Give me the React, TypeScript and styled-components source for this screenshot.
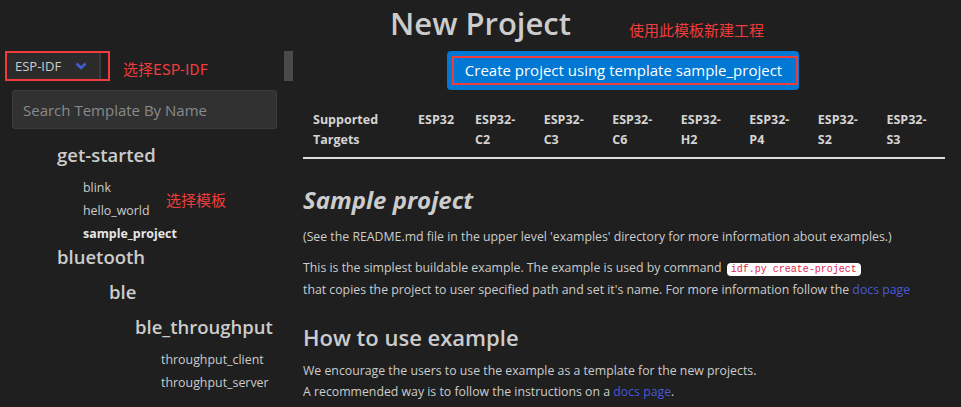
import React from 'react';
import styled, { createGlobalStyle } from 'styled-components';

const GlobalStyle = createGlobalStyle`
  html, body {
    margin: 0;
    padding: 0;
    background: #1f1f1f;
  }
  body {
    font-family: "Open Sans", "Noto Sans", "Noto Sans CJK SC", sans-serif;
    color: #cccccc;
  }
`;

interface TreeNode {
  name: string;
  indent?: number;
  children?: TreeNode[];
  leaves?: string[];
  selected?: string;
}

const tree: TreeNode[] = [
  {
    name: 'get-started',
    leaves: ['blink', 'hello_world', 'sample_project'],
    selected: 'sample_project',
  },
  {
    name: 'bluetooth',
    children: [
      {
        name: 'ble',
        indent: 52,
        children: [
          {
            name: 'ble_throughput',
            indent: 26,
            leaves: ['throughput_client', 'throughput_server'],
          },
        ],
      },
    ],
  },
];

const targets = ['ESP32', 'ESP32-C2', 'ESP32-C3', 'ESP32-C6', 'ESP32-H2', 'ESP32-P4', 'ESP32-S2', 'ESP32-S3'];

const Page = styled.div`
  position: relative;
  width: 961px;
  height: 407px;
  overflow: hidden;
`;

const Header = styled.header`
  height: 51px;
  display: flex;
  align-items: center;
  justify-content: center;
`;

const Title = styled.h1`
  margin: 0;
  font-size: 31px;
  font-weight: 600;
  color: #cccccc;
  line-height: 40px;
  padding-bottom: 6px;
`;

const Note = styled.span<{ $top: number; $left: number }>`
  position: absolute;
  top: ${(p) => p.$top}px;
  left: ${(p) => p.$left}px;
  color: #f03c3c;
  font-size: 15px;
  font-family: "Noto Sans CJK SC", sans-serif;
  line-height: 20px;
  white-space: nowrap;
`;

const Columns = styled.div`
  display: flex;
`;

const Sidebar = styled.aside`
  position: relative;
  width: 290px;
  flex-shrink: 0;
`;

const Scroll = styled.div`
  position: absolute;
  top: 0;
  left: 284px;
  width: 9px;
  height: 30px;
  background: #4a4a4a;
`;

const PickerRow = styled.div`
  display: flex;
  align-items: center;
  padding-left: 5px;
  height: 30px;
`;

const Highlight = styled.div`
  border: 2px solid #f03c3c;
  padding-right: 7px;
  display: flex;
  flex-shrink: 0;
`;

const Select = styled.div`
  width: 94px;
  height: 26px;
  flex-shrink: 0;
  background: #2b2b2b;
  border-right: 2px solid #3a3a3a;
  display: flex;
  align-items: center;
  justify-content: space-between;
  padding: 0 12px 0 8px;
  box-sizing: border-box;
  font-size: 13px;
  color: #cccccc;
`;

const Search = styled.input`
  display: block;
  margin: 9px 0 0 12px;
  width: 265px;
  height: 39px;
  box-sizing: border-box;
  background: #313131;
  border: 1px solid #3c3c3c;
  border-radius: 3px;
  padding: 0 10px;
  font-family: inherit;
  font-size: 15px;
  color: #cccccc;
  outline: none;

  &::placeholder {
    color: #8a8a8a;
  }
`;

const Tree = styled.div`
  margin-top: 14px;
  padding-left: 57px;
`;

const Group = styled.div<{ $indent: number }>`
  padding-left: ${(p) => p.$indent}px;
  margin-top: ${(p) => (p.$indent ? 11 : 0)}px;
`;

const GroupName = styled.div`
  font-size: 18.5px;
  font-weight: 600;
  line-height: 24px;
  color: #cccccc;
`;

const Leaves = styled.ul`
  list-style: none;
  margin: 9px 0 0;
  padding: 0 0 0 26px;
`;

const Leaf = styled.li<{ $active?: boolean }>`
  font-size: 12.4px;
  line-height: 23px;
  font-weight: ${(p) => (p.$active ? 700 : 400)};
  color: ${(p) => (p.$active ? '#e6e6e6' : '#cccccc')};
  white-space: nowrap;
`;

const Main = styled.main`
  flex: 1;
  padding: 0 16px 0 13px;
  min-width: 0;
`;

const ButtonRow = styled.div`
  display: flex;
  justify-content: center;
  padding-right: 2px;
`;

const CreateButton = styled.button`
  background: #0078d4;
  border: none;
  border-radius: 4px;
  padding: 5px 1px 5px 5px;
  cursor: pointer;
  display: flex;
`;

const ButtonLabel = styled.span`
  border: 2px solid #f03c3c;
  padding: 0 14px 0 11px;
  line-height: 25px;
  font-family: "Open Sans", sans-serif;
  font-size: 15px;
  color: #ffffff;
  white-space: nowrap;
`;

const Table = styled.table`
  margin-top: 10px;
  width: 642px;
  border-collapse: collapse;
  table-layout: fixed;
`;

const Th = styled.th<{ $w: number }>`
  box-sizing: border-box;
  width: ${(p) => p.$w}px;
  text-align: left;
  vertical-align: top;
  padding: 10px 0 7px 10px;
  font-size: 12.5px;
  font-weight: 700;
  line-height: 20px;
  color: #d4d4d4;
  border-bottom: 2px solid #dedede;
`;

const Line = styled.span`
  display: block;
  white-space: nowrap;
`;

const Heading = styled.h2<{ $italic?: boolean; $top: number; $size: number }>`
  margin: ${(p) => p.$top}px 0 0;
  font-size: ${(p) => p.$size}px;
  font-style: ${(p) => (p.$italic ? 'italic' : 'normal')};
  font-weight: ${(p) => (p.$italic ? 700 : 600)};
  line-height: 30px;
  color: #cccccc;
`;

const Para = styled.p<{ $top: number; $lh?: number }>`
  margin: ${(p) => p.$top}px 0 0;
  font-size: 12.3px;
  line-height: ${(p) => p.$lh ?? 20}px;
  color: #cccccc;
  white-space: nowrap;
`;

const Code = styled.code`
  background: #ffffff;
  color: #e0244a;
  border-radius: 4px;
  padding: 1px 4px;
  font-family: "Liberation Mono", monospace;
  font-size: 10px;
  margin: 0 2px;
`;

const Link = styled.a`
  color: #4857d8;
  text-decoration: none;
`;

const Chevron = () => (
  <svg width="12" height="8" viewBox="0 0 12 8">
    <path d="M1.5 1.5 L6 6 L10.5 1.5" stroke="#3f5fd0" strokeWidth="2.6" fill="none" />
  </svg>
);

const TreeGroup = ({ node }: { node: TreeNode }) => (
  <Group $indent={node.indent ?? 0}>
    <GroupName>{node.name}</GroupName>
    {node.leaves && (
      <Leaves>
        {node.leaves.map((l) => (
          <Leaf key={l} $active={l === node.selected}>
            {l}
          </Leaf>
        ))}
      </Leaves>
    )}
    {node.children?.map((c) => (
      <TreeGroup key={c.name} node={c} />
    ))}
  </Group>
);

const colWidth = (i: number) => (i === 0 ? 57 : 68.5);

export default function App() {
  return (
    <Page>
      <GlobalStyle />
      <Header>
        <Title>New Project</Title>
      </Header>
      <Note $top={20} $left={629}>使用此模板新建工程</Note>

      <Columns>
        <Sidebar>
          <Scroll />
          <PickerRow>
            <Highlight>
              <Select>
                <span>ESP-IDF</span>
                <Chevron />
              </Select>
            </Highlight>
            <Note $top={8} $left={123}>选择ESP-IDF</Note>
          </PickerRow>
          <Search placeholder="Search Template By Name" />
          <Tree>
            {tree.map((n) => (
              <TreeGroup key={n.name} node={n} />
            ))}
          </Tree>
          <Note $top={139} $left={166}>选择模板</Note>
        </Sidebar>

        <Main>
          <ButtonRow>
            <CreateButton>
              <ButtonLabel>Create project using template sample_project</ButtonLabel>
            </CreateButton>
          </ButtonRow>

          <Table>
            <thead>
              <tr>
                <Th $w={105}>Supported Targets</Th>
                {targets.map((t, i) => {
                  const [chip, variant] = t.split('-');
                  return (
                    <Th key={t} $w={colWidth(i)}>
                      <Line>{variant ? `${chip}-` : chip}</Line>
                      {variant && <Line>{variant}</Line>}
                    </Th>
                  );
                })}
              </tr>
            </thead>
          </Table>

          <Heading $italic $top={26} $size={24}>Sample project</Heading>
          <Para $top={12}>
            (See the README.md file in the upper level 'examples' directory for more information about examples.)
          </Para>
          <Para $top={11}>
            This is the simplest buildable example. The example is used by command <Code>idf.py create-project</Code>
            <br />
            that copies the project to user specified path and set it's name. For more information follow the{' '}
            <Link href="#">docs page</Link>
          </Para>
          <Heading $top={22} $size={22}>How to use example</Heading>
          <Para $top={8} $lh={21}>
            We encourage the users to use the example as a template for the new projects.
            <br />
            A recommended way is to follow the instructions on a <Link href="#">docs page</Link>.
          </Para>
        </Main>
      </Columns>
    </Page>
  );
}
